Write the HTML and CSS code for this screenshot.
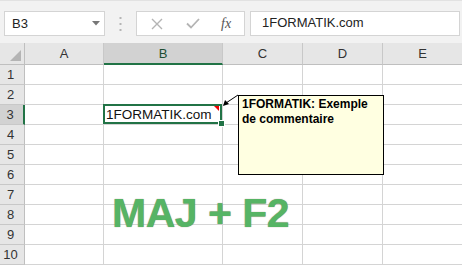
FILE: index.html
```html
<!DOCTYPE html>
<html lang="fr">
<head>
  <meta charset="UTF-8" />
  <title>MAJ + F2</title>
  <link rel="stylesheet" href="styles.css">
</head>
<body>

<div class="toolbar">
  <div class="namebox">
    <span>B3</span>
    <svg class="caret" width="8" height="5" viewBox="0 0 8 5"><path d="M0 0H8L4 4.5Z" fill="#777"/></svg>
  </div>
  <div class="grip">
    <svg width="3" height="14" viewBox="0 0 3 14"><rect x="0.5" y="0" width="2" height="2" fill="#b5b5b5"/><rect x="0.5" y="6" width="2" height="2" fill="#b5b5b5"/><rect x="0.5" y="12" width="2" height="2" fill="#b5b5b5"/></svg>
  </div>
  <div class="fxbtns">
    <svg width="12" height="12" viewBox="0 0 12 12"><path d="M1 1L11 11M11 1L1 11" stroke="#b4b4b4" stroke-width="1.4"/></svg>
    <svg width="14" height="11" viewBox="0 0 14 11"><path d="M1 5.5L5 9.5L13 1" stroke="#b4b4b4" stroke-width="1.8" fill="none"/></svg>
    <span class="fx">fx</span>
  </div>
  <div class="formula">1FORMATIK.com</div>
</div>

<div class="sheet">
  <div class="corner"><div class="tri"></div></div>
  <div class="colhead">A</div>
  <div class="colhead sel">B</div>
  <div class="colhead">C</div>
  <div class="colhead">D</div>
  <div class="colhead">E</div>

  <div class="rowhead">1</div><div class="cell"></div><div class="cell"></div><div class="cell"></div><div class="cell"></div><div class="cell"></div>
  <div class="rowhead">2</div><div class="cell"></div><div class="cell"></div><div class="cell"></div><div class="cell"></div><div class="cell"></div>
  <div class="rowhead sel">3</div><div class="cell"></div>
  <div class="cell active">1FORMATIK.com<span class="note"></span><span class="handle"></span></div>
  <div class="cell"></div><div class="cell"></div><div class="cell"></div>
  <div class="rowhead">4</div><div class="cell"></div><div class="cell"></div><div class="cell"></div><div class="cell"></div><div class="cell"></div>
  <div class="rowhead">5</div><div class="cell"></div><div class="cell"></div><div class="cell"></div><div class="cell"></div><div class="cell"></div>
  <div class="rowhead">6</div><div class="cell"></div><div class="cell"></div><div class="cell"></div><div class="cell"></div><div class="cell"></div>
  <div class="rowhead">7</div><div class="cell"></div><div class="cell"></div><div class="cell"></div><div class="cell"></div><div class="cell"></div>
  <div class="rowhead">8</div><div class="cell"></div><div class="cell"></div><div class="cell"></div><div class="cell"></div><div class="cell"></div>
  <div class="rowhead">9</div><div class="cell"></div><div class="cell"></div><div class="cell"></div><div class="cell"></div><div class="cell"></div>
  <div class="rowhead">10</div><div class="cell"></div><div class="cell"></div><div class="cell"></div><div class="cell"></div><div class="cell"></div>

  <!-- comment attached to B3 -->
  <svg class="pointer" width="18" height="14" viewBox="0 0 18 14">
    <path d="M16 1L4 9" stroke="#000" stroke-width="1"/>
    <path d="M1 12L3 6L7 10Z" fill="#000"/>
  </svg>
  <div class="comment">1FORMATIK: Exemple de commentaire</div>

  <div class="shortcut">MAJ + F2</div>
</div>

</body>
</html>
```
FILE: styles.css
```css
body {
  margin: 0;
  font-family: 'Liberation Sans', Arial, sans-serif;
  background: #fff;
  overflow: hidden;
}

/* barre de formule */
.toolbar {
  display: flex;
  align-items: flex-start;
  height: 43px;
  padding: 10px 0 0 4px;
  box-sizing: border-box;
  background: #f2f2f2;
  border-top: 1px solid #e2e2e2;
}
.namebox {
  width: 101px;
  height: 25px;
  box-sizing: border-box;
  background: #fff;
  border: 1px solid #d4d4d4;
  display: flex;
  align-items: center;
  justify-content: space-between;
  padding: 0 4px 0 7px;
  font-size: 13px;
  color: #222;
}
.grip {
  width: 31px;
  height: 25px;
  display: flex;
  align-items: center;
  justify-content: center;
}
.fxbtns {
  width: 109px;
  height: 25px;
  box-sizing: border-box;
  background: #fff;
  border: 1px solid #d4d4d4;
  display: flex;
  align-items: center;
  padding: 0 0 0 14px;
  gap: 23px;
}
.fx {
  font-family: 'Liberation Serif', serif;
  font-style: italic;
  font-size: 14px;
  color: #555;
  margin-left: -2px;
}
.formula {
  margin-left: 5px;
  width: 210px;
  height: 25px;
  box-sizing: border-box;
  background: #fff;
  border: 1px solid #d4d4d4;
  padding: 3px 0 0 11px;
  font-size: 13px;
  color: #222;
}

/* feuille */
.sheet {
  position: relative;
  display: grid;
  grid-template-columns: 25px 79px 119px 80px 80px 80px;
  grid-template-rows: 22px repeat(10, 20px);
  background: #f2f2f2;
}
.corner, .colhead, .rowhead, .cell {
  box-sizing: border-box;
  border-right: 1px solid #d4d4d4;
  border-bottom: 1px solid #d4d4d4;
}
.corner {
  background: #e6e6e6;
  border-color: #bfbfbf;
  display: flex;
  align-items: flex-end;
  justify-content: flex-end;
  padding: 0 3px 3px 0;
}
.tri {
  width: 11px;
  height: 11px;
  background: #b4b4b4;
  clip-path: polygon(100% 0, 100% 100%, 0 100%);
}
.colhead {
  background: #e6e6e6;
  border-right-color: #c8c8c8;
  border-bottom-color: #bfbfbf;
  font-size: 13px;
  color: #333;
  text-align: center;
  line-height: 21px;
}
.colhead.sel {
  background: #d2d2d2;
  border-bottom: 2px solid #217346;
  color: #1e4e33;
}
.rowhead {
  background: #e6e6e6;
  border-right-color: #bfbfbf;
  border-bottom-color: #c8c8c8;
  font-size: 13px;
  color: #333;
  text-align: center;
  line-height: 20px;
  padding-right: 3px;
}
.rowhead.sel {
  background: #d2d2d2;
  border-right: 2px solid #217346;
}
.cell {
  background: #fff;
  font-size: 13.5px;
  color: #111;
  line-height: 20px;
}
.cell.active {
  position: relative;
  padding: 1px 0 0 3px;
  box-shadow: inset 0 0 0 2px #217346;
  margin: -1px 0 0 -1px;
  height: 21px;
  z-index: 2;
}
.note {
  position: absolute;
  right: 3px;
  top: 2px;
  width: 5px;
  height: 5px;
  background: #e00;
  clip-path: polygon(0 0, 100% 0, 100% 100%);
}
.handle {
  position: absolute;
  right: -3px;
  bottom: -3px;
  width: 5px;
  height: 5px;
  background: #217346;
  border: 1px solid #fff;
}

/* commentaire */
.pointer {
  position: absolute;
  left: 222px;
  top: 51px;
  z-index: 3;
}
.comment {
  position: absolute;
  left: 238px;
  top: 52px;
  width: 146px;
  height: 80px;
  box-sizing: border-box;
  background: #ffffe1;
  border: 1px solid #000;
  padding: 1px 4px 0 3px;
  font-weight: bold;
  font-size: 12px;
  line-height: 15px;
  color: #000;
  z-index: 3;
}

.shortcut {
  position: absolute;
  left: 112px;
  top: 150px;
  font-weight: bold;
  font-size: 41px;
  line-height: 41px;
  letter-spacing: -0.5px;
  color: #56b465;
  text-shadow: 0 0 1px #8c7a62;
  white-space: nowrap;
}
```
